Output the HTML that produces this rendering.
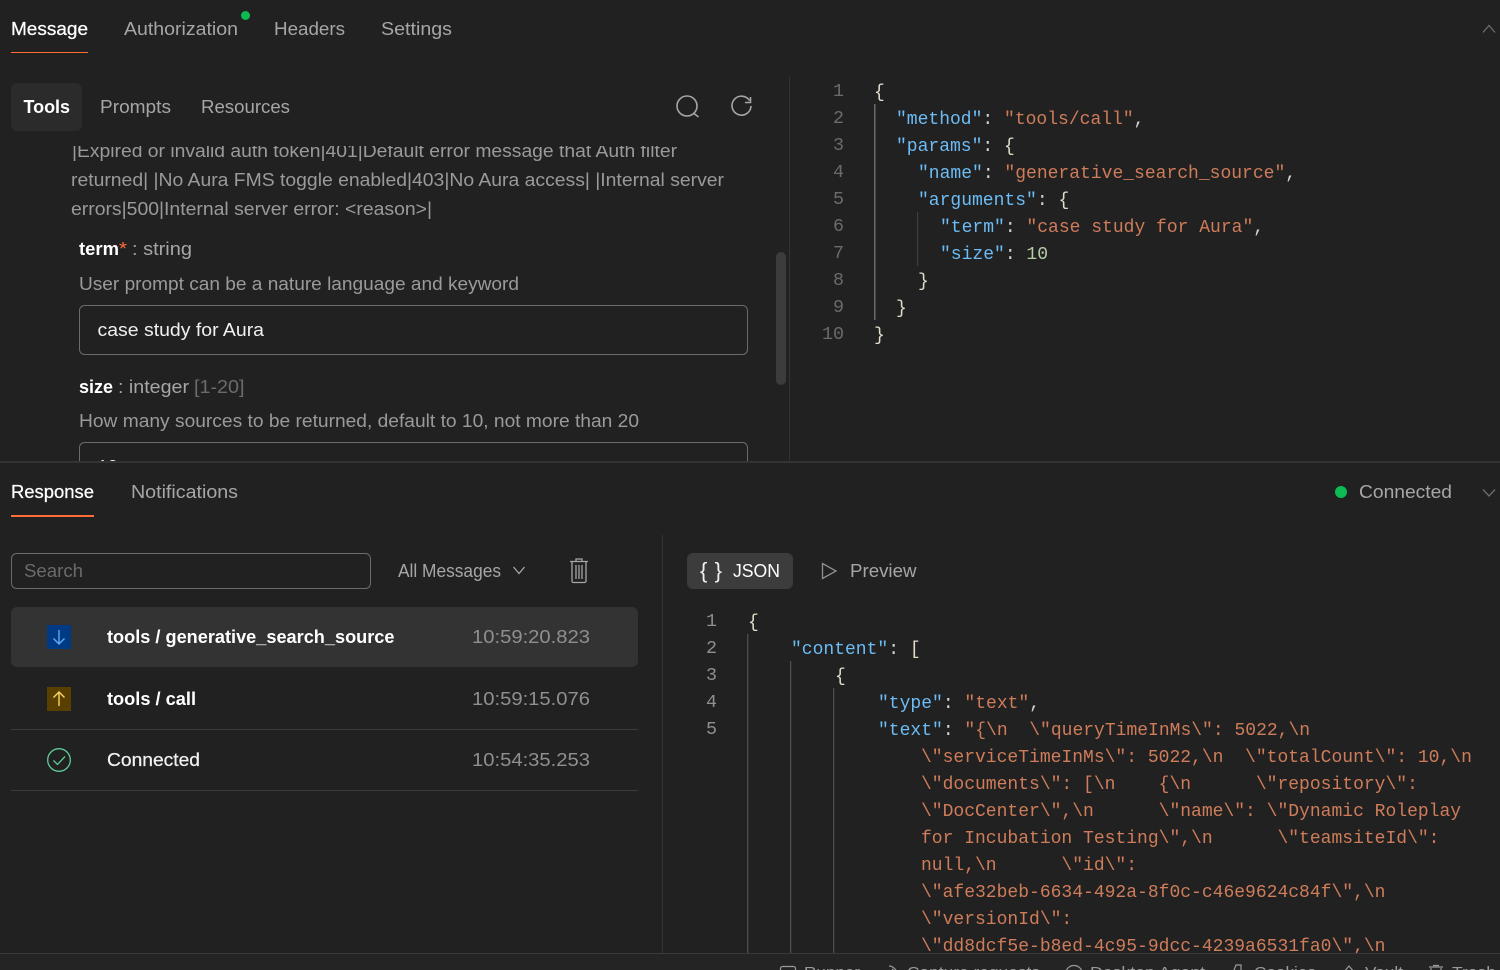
<!DOCTYPE html>
<html><head><meta charset="utf-8"><style>
html,body{margin:0;padding:0;background:#212121;width:1500px;height:970px;overflow:hidden}
svg{display:block}
.s{font-family:"Liberation Sans",sans-serif;font-size:18.4px}
.m{font-family:"Liberation Mono",monospace;font-size:18px;white-space:pre;fill:#d4d4d4;transform:translateY(1px)}
.k{fill:#6cbcf5}.v{fill:#ce7c5a}.n{fill:#b5cea8}.b{fill:#e0dcc8}
.l{font-family:"Liberation Mono",monospace;font-size:18.34px;fill:#6b6b6b;text-anchor:end}
.w{fill:#fff}.g{fill:#a6a6a6}.h{font-weight:bold}
.a{stroke:#fff;stroke-width:.25}
</style></head><body>
<svg width="1500" height="970" viewBox="0 0 1500 970" xmlns="http://www.w3.org/2000/svg">
<defs>
<clipPath id="c1"><rect x="0" y="146" width="770" height="315"/></clipPath>
<clipPath id="c2"><rect x="664" y="600" width="836" height="353"/></clipPath>
<clipPath id="c3"><rect x="0" y="954" width="1500" height="16"/></clipPath>
</defs>
<rect width="1500" height="970" fill="#212121"/>

<!-- top tabs -->
<g class="s">
<text x="11" y="35" class="w a" textLength="77" lengthAdjust="spacingAndGlyphs">Message</text>
<text x="124" y="35" class="g" textLength="114" lengthAdjust="spacingAndGlyphs">Authorization</text>
<text x="274" y="35" class="g" textLength="71" lengthAdjust="spacingAndGlyphs">Headers</text>
<text x="381" y="35" class="g" textLength="71" lengthAdjust="spacingAndGlyphs">Settings</text>
</g>
<rect x="11" y="52" width="77" height="1" fill="#ff6c37"/>
<circle cx="245.5" cy="15.5" r="4.5" fill="#0cbb52"/>
<path d="M1483 32.5L1489 25.5L1495 32.5" fill="none" stroke="#6b6b6b" stroke-width="1.3"/>

<!-- sub tabs -->
<rect x="11" y="83" width="71" height="48" rx="6" fill="#2b2b2b"/>
<g class="s">
<text x="23.5" y="113" class="w h" textLength="46.5" lengthAdjust="spacingAndGlyphs">Tools</text>
<text x="100" y="113" class="g" textLength="71" lengthAdjust="spacingAndGlyphs">Prompts</text>
<text x="201" y="113" class="g" textLength="89" lengthAdjust="spacingAndGlyphs">Resources</text>
</g>
<g fill="none" stroke="#a6a6a6" stroke-width="1.6">
<circle cx="687" cy="106" r="10"/>
<path d="M694 113.5L698.5 117"/>
<path d="M749.5 100.5A9.5 9.5 0 1 0 751 106"/>
<path d="M750.5 97V102.5H745"/>
</g>

<!-- form area -->
<g clip-path="url(#c1)">
<g class="s" style="font-size:18.3px" fill="#9a9a9a">
<text x="72" y="157" textLength="605" lengthAdjust="spacingAndGlyphs">|Expired or invalid auth token|401|Default error message that Auth filter</text>
<text x="71" y="186" textLength="653" lengthAdjust="spacingAndGlyphs">returned| |No Aura FMS toggle enabled|403|No Aura access| |Internal server</text>
<text x="71" y="215" textLength="361" lengthAdjust="spacingAndGlyphs">errors|500|Internal server error: &lt;reason&gt;|</text>
<text x="79" y="255" class="w h" textLength="40" lengthAdjust="spacingAndGlyphs">term</text>
<text x="119" y="255" fill="#ff6c37" textLength="8" lengthAdjust="spacingAndGlyphs">*</text>
<text x="132" y="255" fill="#a6a6a6" textLength="60" lengthAdjust="spacingAndGlyphs">: string</text>
<text x="79" y="290" textLength="440" lengthAdjust="spacingAndGlyphs">User prompt can be a nature language and keyword</text>
<text x="97.5" y="336" fill="#f0f0f0" textLength="166.5" lengthAdjust="spacingAndGlyphs">case study for Aura</text>
<text x="79" y="393" class="w h" textLength="34" lengthAdjust="spacingAndGlyphs">size</text>
<text x="118" y="393" fill="#a6a6a6" textLength="71" lengthAdjust="spacingAndGlyphs">: integer</text>
<text x="194" y="393" fill="#6b6b6b" textLength="50.5" lengthAdjust="spacingAndGlyphs">[1-20]</text>
<text x="79" y="427" textLength="560" lengthAdjust="spacingAndGlyphs">How many sources to be returned, default to 10, not more than 20</text>
<text x="97.5" y="473" fill="#f0f0f0">10</text>
</g>
<rect x="79.5" y="305.5" width="668" height="49" rx="5" fill="none" stroke="#6b6b6b"/>
<rect x="79.5" y="442.5" width="668" height="49" rx="5" fill="none" stroke="#6b6b6b"/>
</g>
<rect x="776" y="252" width="10" height="133" rx="5" fill="#3c3c3c"/>
<rect x="789" y="77" width="1" height="384" fill="#333"/>

<!-- top code -->
<rect x="874" y="104" width="1.5" height="216" fill="#6b6b6b"/>
<rect x="917" y="212" width="1.2" height="54" fill="#3f3f3f"/>
<text class="l"><tspan x="844" y="96">1</tspan><tspan x="844" y="123">2</tspan><tspan x="844" y="150">3</tspan><tspan x="844" y="177">4</tspan><tspan x="844" y="204">5</tspan><tspan x="844" y="231">6</tspan><tspan x="844" y="258">7</tspan><tspan x="844" y="285">8</tspan><tspan x="844" y="312">9</tspan><tspan x="844" y="339">10</tspan></text>
<text class="m" x="874" y="96"><tspan class="b">{</tspan></text>
<text class="m" x="896" y="123"><tspan class="k">"method"</tspan>: <tspan class="v">"tools/call"</tspan>,</text>
<text class="m" x="896" y="150"><tspan class="k">"params"</tspan>: <tspan class="b">{</tspan></text>
<text class="m" x="918" y="177"><tspan class="k">"name"</tspan>: <tspan class="v">"generative_search_source"</tspan>,</text>
<text class="m" x="918" y="204"><tspan class="k">"arguments"</tspan>: <tspan class="b">{</tspan></text>
<text class="m" x="940" y="231"><tspan class="k">"term"</tspan>: <tspan class="v">"case study for Aura"</tspan>,</text>
<text class="m" x="940" y="258"><tspan class="k">"size"</tspan>: <tspan class="n">10</tspan></text>
<text class="m" x="918" y="285"><tspan class="b">}</tspan></text>
<text class="m" x="896" y="312"><tspan class="b">}</tspan></text>
<text class="m" x="874" y="339"><tspan class="b">}</tspan></text>

<!-- divider -->
<rect x="0" y="461" width="1500" height="2" fill="#333"/>

<!-- response header -->
<g class="s">
<text x="11" y="498" class="w a" textLength="83" lengthAdjust="spacingAndGlyphs">Response</text>
<text x="131" y="498" class="g" textLength="107" lengthAdjust="spacingAndGlyphs">Notifications</text>
<text x="1359" y="498" class="g" textLength="93" lengthAdjust="spacingAndGlyphs">Connected</text>
</g>
<rect x="11" y="515" width="83" height="2" fill="#ff6c37"/>
<circle cx="1341" cy="492" r="6" fill="#0cbb52"/>
<path d="M1483 489.5L1489 496L1495 489.5" fill="none" stroke="#6b6b6b" stroke-width="1.3"/>

<!-- list toolbar -->
<rect x="11.5" y="553.5" width="359" height="35" rx="5" fill="none" stroke="#6b6b6b"/>
<g class="s">
<text x="24" y="577" fill="#6b6b6b" textLength="59" lengthAdjust="spacingAndGlyphs">Search</text>
<text x="398" y="577" class="g" textLength="103" lengthAdjust="spacingAndGlyphs">All Messages</text>
</g>
<path d="M513.5 567L519 573.5L524.5 567" fill="none" stroke="#a6a6a6" stroke-width="1.3"/>
<g fill="none" stroke="#a6a6a6" stroke-width="1.3">
<path d="M570 561.5H588"/><path d="M576 561V559H582V561"/>
<path d="M572 562V581A1.5 1.5 0 0 0 573.5 582.5H584.5A1.5 1.5 0 0 0 586 581V562"/>
<path d="M576 565V579M579 565V579M582 565V579"/>
</g>

<!-- rows -->
<rect x="11" y="607" width="627" height="60" rx="6" fill="#333"/>
<rect x="47" y="625" width="24" height="24" fill="#003a85"/>
<path d="M59 630V644M53.5 638.5L59 644L64.5 638.5" fill="none" stroke="#5ea9f5" stroke-width="1.4"/>
<rect x="47" y="687" width="24" height="24" fill="#5a4000"/>
<path d="M59 706V692M53.5 697.5L59 692L64.5 697.5" fill="none" stroke="#f5d565" stroke-width="1.4"/>
<circle cx="59" cy="760" r="11.3" fill="none" stroke="#5ecb97" stroke-width="1.3"/>
<path d="M53.5 760.5L57.5 764.5L65 756.5" fill="none" stroke="#5ecb97" stroke-width="1.3"/>
<rect x="11" y="729" width="627" height="1" fill="#3c3c3c"/>
<rect x="11" y="790" width="627" height="1" fill="#3c3c3c"/>
<g class="s">
<text x="107" y="643" class="w h" textLength="287.5" lengthAdjust="spacingAndGlyphs">tools / generative_search_source</text>
<text x="472" y="643" fill="#8f8f8f" textLength="118" lengthAdjust="spacingAndGlyphs">10:59:20.823</text>
<text x="107" y="705" class="w h" textLength="89" lengthAdjust="spacingAndGlyphs">tools / call</text>
<text x="472" y="705" fill="#8f8f8f" textLength="118" lengthAdjust="spacingAndGlyphs">10:59:15.076</text>
<text x="107" y="766" fill="#f0f0f0" stroke="#f0f0f0" stroke-width=".25" textLength="93" lengthAdjust="spacingAndGlyphs">Connected</text>
<text x="472" y="766" fill="#8f8f8f" textLength="118" lengthAdjust="spacingAndGlyphs">10:54:35.253</text>
</g>
<rect x="662" y="535" width="1" height="418" fill="#333"/>

<!-- JSON toggle -->
<rect x="687" y="553" width="106" height="36" rx="6" fill="#3c3c3c"/>
<text x="700" y="578" font-family="Liberation Sans,sans-serif" font-size="22" fill="#f0f0f0" textLength="22" lengthAdjust="spacing" style="white-space:pre">{ }</text>
<g class="s">
<text x="733" y="577" class="w" textLength="47" lengthAdjust="spacingAndGlyphs">JSON</text>
<text x="850" y="577" class="g" textLength="66.5" lengthAdjust="spacingAndGlyphs">Preview</text>
</g>
<path d="M822.5 563.5V578.5L836 571Z" fill="none" stroke="#8f8f8f" stroke-width="1.3"/>

<!-- response code -->
<g clip-path="url(#c2)">
<rect x="747" y="634" width="1.3" height="330" fill="#4d4d4d"/>
<rect x="790" y="661" width="1.3" height="300" fill="#4d4d4d"/>
<rect x="833" y="688" width="1.3" height="270" fill="#4d4d4d"/>
<text class="l" style="fill:#8f8f8f"><tspan x="717" y="626">1</tspan><tspan x="717" y="653">2</tspan><tspan x="717" y="680">3</tspan><tspan x="717" y="707">4</tspan><tspan x="717" y="734">5</tspan></text>
<text class="m" x="748" y="626"><tspan class="b">{</tspan></text>
<text class="m" x="791" y="653"><tspan class="k">"content"</tspan>: <tspan class="b">[</tspan></text>
<text class="m" x="835" y="680"><tspan class="b">{</tspan></text>
<text class="m" x="878" y="707"><tspan class="k">"type"</tspan>: <tspan class="v">"text"</tspan>,</text>
<text class="m" x="878" y="734"><tspan class="k">"text"</tspan>: <tspan class="v">"{\n  \"queryTimeInMs\": 5022,\n</tspan></text>
<g fill="#ce7c5a">
<text class="v m" x="921" y="761">\"serviceTimeInMs\": 5022,\n  \"totalCount\": 10,\n</text>
<text class="v m" x="921" y="788">\"documents\": [\n    {\n      \"repository\":</text>
<text class="v m" x="921" y="815">\"DocCenter\",\n      \"name\": \"Dynamic Roleplay</text>
<text class="v m" x="921" y="842">for Incubation Testing\",\n      \"teamsiteId\":</text>
<text class="v m" x="921" y="869">null,\n      \"id\":</text>
<text class="v m" x="921" y="896">\"afe32beb-6634-492a-8f0c-c46e9624c84f\",\n</text>
<text class="v m" x="921" y="923">\"versionId\":</text>
<text class="v m" x="921" y="950">\"dd8dcf5e-b8ed-4c95-9dcc-4239a6531fa0\",\n</text>
</g>
</g>

<!-- status bar -->
<rect x="0" y="953" width="1500" height="17" fill="#242424"/>
<rect x="0" y="953" width="1500" height="1" fill="#3a3a3a"/>
<g clip-path="url(#c3)">
<g font-family="Liberation Sans,sans-serif" font-size="15" fill="#9a9a9a">
<text x="804" y="977" textLength="56" lengthAdjust="spacingAndGlyphs">Runner</text>
<text x="907" y="977" textLength="133" lengthAdjust="spacingAndGlyphs">Capture requests</text>
<text x="1090" y="977" textLength="115" lengthAdjust="spacingAndGlyphs">Desktop Agent</text>
<text x="1254" y="977" textLength="62" lengthAdjust="spacingAndGlyphs">Cookies</text>
<text x="1365" y="977" textLength="38" lengthAdjust="spacingAndGlyphs">Vault</text>
<text x="1452" y="977" textLength="44" lengthAdjust="spacingAndGlyphs">Trash</text>
</g>
<g fill="none" stroke="#9a9a9a" stroke-width="1.2">
<rect x="780.5" y="966.5" width="15" height="12" rx="2"/>
<path d="M889 966C893 966 897 970 898 975M892 969C894 970 895 972 896 974"/>
<circle cx="1074" cy="974" r="8.5"/>
<path d="M1232 975L1236 965H1241V975"/>
<path d="M1343 973L1349 966L1355 973"/>
<path d="M1429 967H1443M1433 965.5H1439M1431 968V978H1441V968"/>
</g>
</g>
</svg>
</body></html>
